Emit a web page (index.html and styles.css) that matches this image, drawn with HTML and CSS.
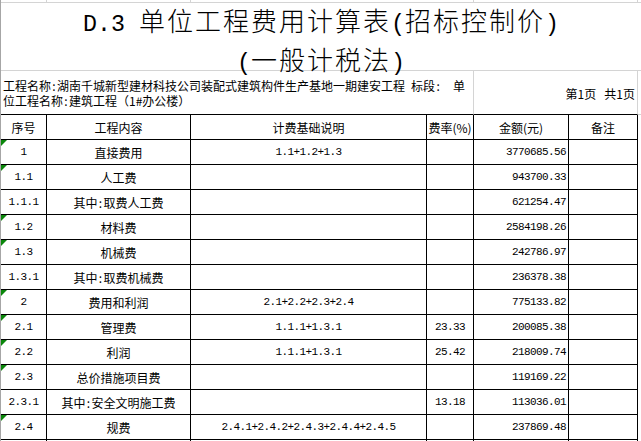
FILE: index.html
```html
<!DOCTYPE html>
<html lang="zh-CN">
<head>
<meta charset="utf-8">
<title>D.3 单位工程费用计算表</title>
<link rel="stylesheet" href="styles.css">
</head>
<body>
<div class="sheet">
  <div class="row sliver">
    <div class="c g"></div><div class="c g"></div><div class="c g s2"></div><div class="c g s2"></div><div class="c fill gb"></div>
  </div>
  <div class="row title">
    <div class="c all">
      <div class="tline"><span class="tm">D.3 </span>单位工程费用计算表<span class="tm">(</span>招标控制价<span class="tm">)</span></div>
      <div class="tline"><span class="tm">(</span>一般计税法<span class="tm">)</span></div>
    </div>
  </div>
  <div class="row info">
    <div class="c s4 left"><div class="itext"><div>工程名称<span class="h">:</span>湖南千城新型建材科技公司装配式建筑构件生产基地一期建安工程<span class="h"> </span>标段<span class="h">:</span><span class="h"> </span><span class="h"> </span>单</div><div>位工程名称<span class="h">:</span>建筑工程（1#办公楼）</div></div></div>
    <div class="c s2 r page">第1页&nbsp;&nbsp;&nbsp;共1页</div>
    <div class="c fill gb"></div>
  </div>
  <div class="row">
    <div class="c">序号</div><div class="c">工程内容</div><div class="c">计费基础说明</div><div class="c">费率(%)</div><div class="c">金额(元)</div><div class="c">备注</div>
  </div>
  <div class="row">
    <div class="c n tri">1</div><div class="c">直接费用</div><div class="c n">1.1+1.2+1.3</div><div class="c"></div><div class="c n r">3770685.56</div><div class="c"></div>
  </div>
  <div class="row">
    <div class="c n tri">1.1</div><div class="c">人工费</div><div class="c"></div><div class="c"></div><div class="c n r">943700.33</div><div class="c"></div>
  </div>
  <div class="row">
    <div class="c n">1.1.1</div><div class="c">其中<span class="h">:</span>取费人工费</div><div class="c"></div><div class="c"></div><div class="c n r">621254.47</div><div class="c"></div>
  </div>
  <div class="row">
    <div class="c n tri">1.2</div><div class="c">材料费</div><div class="c"></div><div class="c"></div><div class="c n r">2584198.26</div><div class="c"></div>
  </div>
  <div class="row">
    <div class="c n tri">1.3</div><div class="c">机械费</div><div class="c"></div><div class="c"></div><div class="c n r">242786.97</div><div class="c"></div>
  </div>
  <div class="row">
    <div class="c n">1.3.1</div><div class="c">其中<span class="h">:</span>取费机械费</div><div class="c"></div><div class="c"></div><div class="c n r">236378.38</div><div class="c"></div>
  </div>
  <div class="row">
    <div class="c n tri">2</div><div class="c">费用和利润</div><div class="c n">2.1+2.2+2.3+2.4</div><div class="c"></div><div class="c n r">775133.82</div><div class="c"></div>
  </div>
  <div class="row">
    <div class="c n tri">2.1</div><div class="c">管理费</div><div class="c n">1.1.1+1.3.1</div><div class="c n">23.33</div><div class="c n r">200085.38</div><div class="c"></div>
  </div>
  <div class="row">
    <div class="c n tri">2.2</div><div class="c">利润</div><div class="c n">1.1.1+1.3.1</div><div class="c n">25.42</div><div class="c n r">218009.74</div><div class="c"></div>
  </div>
  <div class="row">
    <div class="c n tri">2.3</div><div class="c">总价措施项目费</div><div class="c"></div><div class="c"></div><div class="c n r">119169.22</div><div class="c"></div>
  </div>
  <div class="row">
    <div class="c n">2.3.1</div><div class="c">其中<span class="h">:</span>安全文明施工费</div><div class="c"></div><div class="c n">13.18</div><div class="c n r">113036.01</div><div class="c"></div>
  </div>
  <div class="row">
    <div class="c n tri">2.4</div><div class="c">规费</div><div class="c n">2.4.1+2.4.2+2.4.3+2.4.4+2.4.5</div><div class="c"></div><div class="c n r">237869.48</div><div class="c"></div>
  </div>
  <div class="row last">
    <div class="c"></div><div class="c"></div><div class="c"></div><div class="c"></div><div class="c"></div><div class="c"></div>
  </div>
</div>
</body>
</html>
```
FILE: styles.css
```css
* {
  box-sizing: border-box;
  margin: 0;
  padding: 0;
}

html,
body {
  background: #fff;
}

body {
  font-family: "Noto Sans CJK SC", "Noto Sans CJK JP", sans-serif;
  font-size: 12px;
  color: #000;
  overflow: hidden;
  height: 441px;
}

.sheet {
  width: 641px;
  height: 441px;
  overflow: hidden;
  border-left: 1px solid #a6a6a6;
}

.row {
  display: grid;
  grid-template-columns: 46px 144px 236px 47px 95px 69px 1fr;
}

.c {
  position: relative;
  height: 25px;
  display: flex;
  align-items: center;
  justify-content: center;
  white-space: nowrap;
  border-right: 1px solid #000;
  border-bottom: 1px solid #000;
}

.last .c {
  height: 2px;
}

.g {
  border-color: #d4d4d4;
}

.s2 {
  grid-column: span 2;
}

.s4 {
  grid-column: span 4;
}

.all {
  grid-column: 1 / -1;
}

.fill {
  border-right: 0;
  border-bottom: 0;
}

.gb {
  border-bottom: 1px solid #d4d4d4;
}

.sliver .c {
  height: 3px;
}

.title .c {
  height: 68px;
  display: block;
  border-right: 0;
  border-bottom: 1px solid #d4d4d4;
  text-align: center;
  font-size: 26px;
  font-weight: 300;
  line-height: 34px;
  letter-spacing: 2px;
}

.tm {
  font-family: "Liberation Mono", monospace;
  font-size: 23.3px;
  font-weight: 400;
  letter-spacing: 0;
}

.info .c {
  height: 44px;
  border-right-color: #d4d4d4;
}

.info .fill {
  border-bottom: 1px solid #d4d4d4;
}

.left {
  justify-content: flex-start;
  padding-left: 2px;
}

.itext {
  line-height: 15px;
}

.h {
  display: inline-block;
  width: 6px;
  text-align: center;
}

.page {
  padding-top: 2px;
}

.n {
  font-family: "Liberation Mono", monospace;
  font-size: 11px;
  letter-spacing: -0.6px;
}

.r {
  justify-content: flex-end;
  padding-right: 2px;
}

.tri::before {
  content: "";
  position: absolute;
  left: 0;
  top: 0;
  border-top: 6px solid #0b860b;
  border-right: 6px solid transparent;
}
```
